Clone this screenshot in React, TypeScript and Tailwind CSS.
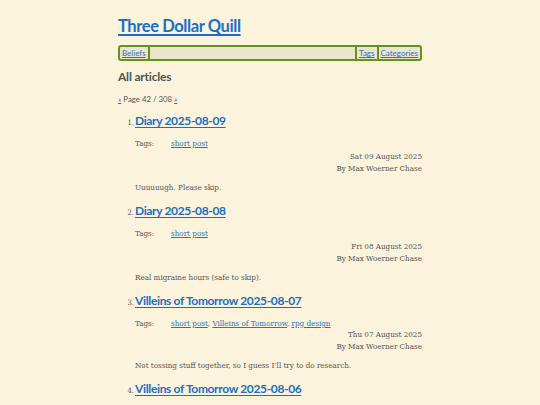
import React from "react";

const heading = { fontFamily: 'Lato, "Open Sans", sans-serif' };
const serif = { fontFamily: '"DejaVu Serif", "Liberation Serif", serif' };

type Post = { n: number; title: string; tags: string[]; date: string; text: string };

const posts: Post[] = [
  { n: 1, title: "Diary 2025-08-09", tags: ["short post"], date: "Sat 09 August 2025", text: "Uuuuuugh. Please skip." },
  { n: 2, title: "Diary 2025-08-08", tags: ["short post"], date: "Fri 08 August 2025", text: "Real migraine hours (safe to skip)." },
  {
    n: 3,
    title: "Villeins of Tomorrow 2025-08-07",
    tags: ["short post", "Villeins of Tomorrow", "rpg design"],
    date: "Thu 07 August 2025",
    text: "Not tossing stuff together, so I guess I\u2019ll try to do research.",
  },
  { n: 4, title: "Villeins of Tomorrow 2025-08-06", tags: ["short post"], date: "Wed 06 August 2025", text: "" },
];

export default function App() {
  return (
    <div className="h-[405px] overflow-hidden bg-[#fbf3dc] text-[#555]">
      <div className="mx-auto w-[304px] pt-[14px]">
        <h1 style={heading} className="text-[16.5px] leading-[24px] font-bold tracking-[-0.4px]">
          <a href="#" className="text-[#1b6fc4] underline decoration-[1.5px] underline-offset-2">Three Dollar Quill</a>
        </h1>
        <nav
          style={heading}
          className="mt-[7px] flex h-[16px] items-center rounded-[3px] border-2 border-[#5f961c] bg-[#ebe4cf] text-[8px] leading-none"
        >
          <a href="#" className="px-[2px] text-[#2a74bf] underline">Beliefs</a>
          <span className="h-full w-[2px] bg-[#5f961c]" />
          <span className="flex-1" />
          <span className="h-full w-[2px] bg-[#5f961c]" />
          <a href="#" className="px-[2px] text-[#2a74bf] underline">Tags</a>
          <span className="h-full w-[2px] bg-[#5f961c]" />
          <a href="#" className="px-[2px] text-[#2a74bf] underline">Categories</a>
        </nav>
        <h2 style={heading} className="mt-[8px] text-[12px] leading-[16px] font-bold tracking-[-0.2px] text-[#4d555a]">All articles</h2>
        <p style={heading} className="mt-[9px] text-[7.8px] leading-[10px] text-[#555]">
          <a href="#" className="text-[#2a74bf] underline">«</a> Page 42 / 308{" "}
          <a href="#" className="text-[#2a74bf] underline">»</a>
        </p>
        <ol className="mt-[9px]">
          {posts.map((p) => (
            <li key={p.n} className="mb-[10px]">
              <div className="flex items-baseline">
                <span style={serif} className="w-[17px] pr-[1px] text-right text-[7.5px] font-stretch-condensed">{p.n}.</span>
                <a
                  href="#"
                  style={heading}
                  className="text-[12px] leading-[16px] font-bold tracking-[-0.35px] text-[#1b6fc4] underline decoration-[1px] underline-offset-2"
                >
                  {p.title}
                </a>
              </div>
              <div style={serif} className="pl-[17px] text-[8px] font-stretch-condensed">
                <div className="mt-[10px] flex leading-[10px]">
                  <span className="w-[36px]">Tags:</span>
                  <span>
                    {p.tags.map((t, i) => (
                      <React.Fragment key={t}>
                        <a href="#" className="text-[#2a74bf] underline">{t}</a>
                        {i < p.tags.length - 1 ? ", " : ""}
                      </React.Fragment>
                    ))}
                  </span>
                </div>
                <div className={`${p.n === 3 ? "mt-[0px]" : "mt-[2px]"} text-right leading-[12px]`}>
                  <div>{p.date}</div>
                  <div>By Max Woerner Chase</div>
                </div>
                <p className="mt-[8px] leading-[10px]">{p.text}</p>
              </div>
            </li>
          ))}
        </ol>
      </div>
    </div>
  );
}
